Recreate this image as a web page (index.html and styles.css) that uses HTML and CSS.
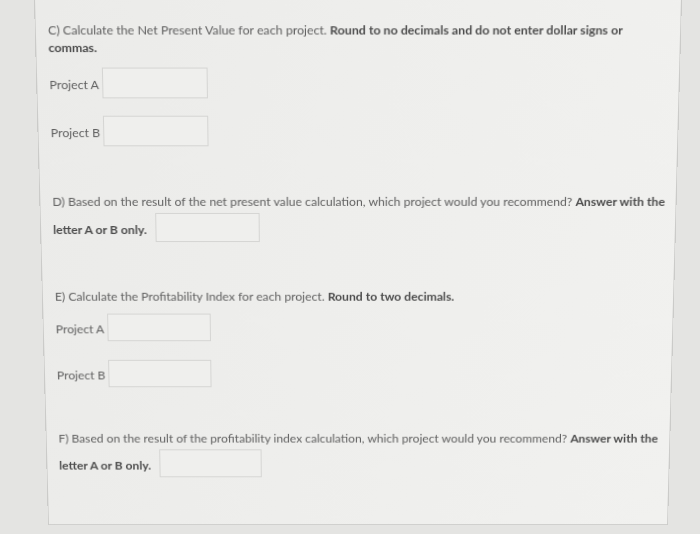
FILE: index.html
```html
<!DOCTYPE html>
<html lang="en">
<head>
<meta charset="utf-8">
<title>Capital budgeting questions</title>
<link rel="stylesheet" href="styles.css">
</head>
<body>
<div class="card">
  <section class="q q-c">
    <p class="prompt">C) Calculate the Net Present Value for each project. <strong>Round to no decimals and do not enter dollar signs or commas.</strong></p>
    <div class="field"><label>Project A</label><input class="answer" type="text"></div>
    <div class="field"><label>Project B</label><input class="answer" type="text"></div>
  </section>
  <section class="q q-d">
    <p class="prompt tall">D) Based on the result of the net present value calculation, which project would you recommend? <strong>Answer with the letter A or B only.</strong> <input class="answer" type="text"></p>
  </section>
  <section class="q q-e">
    <p class="prompt">E) Calculate the Profitability Index for each project. <strong>Round to two decimals.</strong></p>
    <div class="field"><label>Project A</label><input class="answer" type="text"></div>
    <div class="field"><label>Project B</label><input class="answer" type="text"></div>
  </section>
  <section class="q q-f">
    <p class="prompt tall">F) Based on the result of the profitability index calculation, which project would you recommend? <strong>Answer with the letter A or B only.</strong> <input class="answer" type="text"></p>
  </section>
</div>
</body>
</html>
```
FILE: styles.css
```css
html, body {
  margin: 0;
  padding: 0;
}
body {
  background: #e4e4e2;
  font-family: Lato, "Open Sans", sans-serif;
  font-size: 12.2px;
  color: #616161;
  height: 534px;
  overflow: hidden;
}
.card {
  box-sizing: border-box;
  margin-left: 41px;
  width: 634px;
  background: linear-gradient(100deg, #ebebe9 0%, #eeeeec 45%, #f1f1ef 100%);
  border: 1px solid #cbcbc9;
  border-top: none;
  padding: 25px 7px 48.5px 12px;
  transform-origin: 318px 262px;
  transform: perspective(1000px) rotateX(-4.8deg);
}
.prompt {
  margin: 0;
  line-height: 17px;
}
.prompt strong {
  font-weight: 700;
  color: #4c4c4c;
}
.prompt.tall {
  line-height: 22px;
}
.field {
  display: flex;
  align-items: center;
  gap: 3px;
  margin-top: 18px;
}
.field label {
  padding-top: 3px;
}
.q-c .field:first-of-type {
  margin-top: 11px;
}
.q-c .field + .field {
  margin-top: 17px;
}
.answer {
  box-sizing: border-box;
  width: 104px;
  height: 29px;
  margin: 0;
  border: 1px solid #d5d5d3;
  background: #efefed;
  font: inherit;
}
.q-c .answer {
  height: 30px;
}
.q-e .answer {
  height: 28px;
}
.prompt .answer {
  margin-left: 5px;
  vertical-align: 1.5px;
}
.q-d {
  margin-top: 43.5px;
}
.q-e {
  margin-top: 46px;
}
.q-e .field:first-of-type {
  margin-top: 9px;
}
.q-e .field + .field {
  margin-top: 19px;
}
.q-f {
  margin-top: 42.5px;
}
```
